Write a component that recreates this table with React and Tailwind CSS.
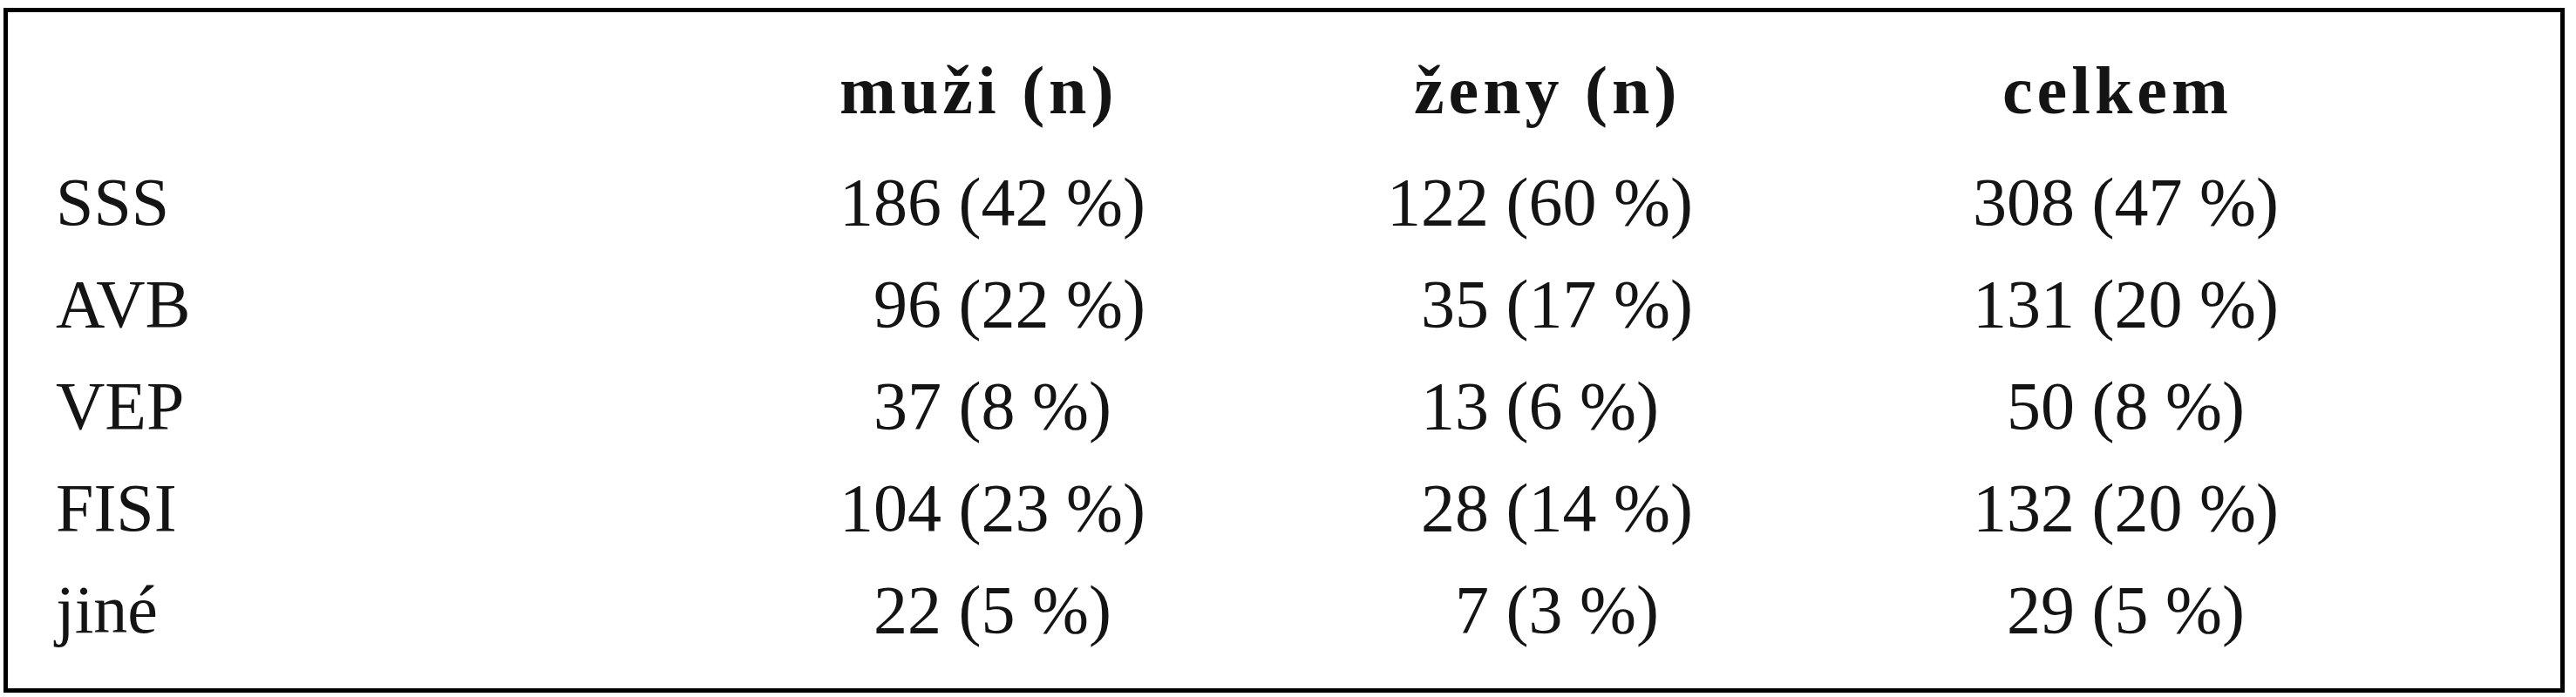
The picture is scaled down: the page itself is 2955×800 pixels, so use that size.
import React from "react";

const rows = [
  { label: "SSS", cells: [["186", "42"], ["122", "60"], ["308", "47"]] },
  { label: "AVB", cells: [["96", "22"], ["35", "17"], ["131", "20"]] },
  { label: "VEP", cells: [["37", "8"], ["13", "6"], ["50", "8"]] },
  { label: "FISI", cells: [["104", "23"], ["28", "14"], ["132", "20"]] },
  { label: "jiné", cells: [["22", "5"], ["7", "3"], ["29", "5"]] },
];

const cols = "grid grid-cols-[954px_628px_672px_1fr]";

function Value({ n, pct }) {
  return (
    <span className="whitespace-nowrap">
      <span className="inline-block w-[117px] text-right">{n}</span> ({pct} %)
    </span>
  );
}

export default function App() {
  return (
    <div className="bg-white w-[2955px] h-[800px] pt-[9px] pl-[4px]">
      <div
        className="w-[2938px] h-[786px] border-[5px] border-black pt-[31px] text-[78px] text-[#141414]"
        style={{ fontFamily: '"Liberation Serif", "Times New Roman", serif' }}
      >
        <div className={`${cols} leading-[117px] font-bold tracking-[5px] mb-[11px]`}>
          <div></div>
          <div>muži (n)</div>
          <div className="pl-[31px]">ženy (n)</div>
          <div className="pl-[34px]">celkem</div>
        </div>
        {rows.map((row) => (
          <div key={row.label} className={`${cols} leading-[117px]`}>
            <div className="pl-[55px]">{row.label}</div>
            {row.cells.map(([n, pct], i) => (
              <div key={i}>
                <Value n={n} pct={pct} />
              </div>
            ))}
          </div>
        ))}
      </div>
    </div>
  );
}
